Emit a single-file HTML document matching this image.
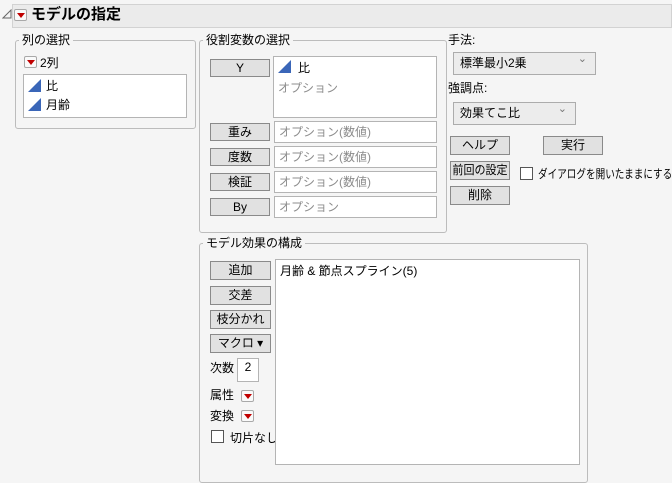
<!DOCTYPE html>
<html><head><meta charset="utf-8"><style>
*{box-sizing:border-box}
body{margin:0;width:672px;height:477px;background:#f5f5f5;font-family:"Liberation Sans","Noto Sans CJK JP",sans-serif;font-size:12px;color:#000;position:relative;overflow:hidden}
.a{position:absolute;white-space:nowrap}
.grp{position:absolute;border:1px solid #bcbcbc;border-radius:3px}
.lg{position:absolute;background:#f5f5f5;padding:0 3px;font-size:12px;line-height:14px;white-space:nowrap}
.btn{position:absolute;background:#e1e1e1;border:1px solid #8a8a8a;text-align:center;font-size:12px;line-height:16px;white-space:nowrap;overflow:hidden}
.box{position:absolute;background:#fff;border:1px solid #b4b4b4;white-space:nowrap}
.ph{color:#8c8c8c}
.rb{position:absolute;width:13px;height:12px;border:1px solid #a9a9a9;border-radius:2px;background:#fafafa}
.rb:after{content:"";position:absolute;left:2px;top:3px;border-left:4px solid transparent;border-right:4px solid transparent;border-top:5px solid #c00000}
.tri{position:absolute;width:14px;height:13px}
.dd{position:absolute;background:#ececec;border:1px solid #acacac;padding-left:6px;line-height:20px;white-space:nowrap}
.dd:after{content:"⌄";position:absolute;right:8px;top:-4px;color:#777;font-size:11px}
.cb{position:absolute;width:13px;height:13px;border:1px solid #555;background:#fff}
</style></head><body>
<svg class="a" style="left:2px;top:9px" width="10" height="10"><path d="M1 9 L9 9 L9 1 Z" fill="none" stroke="#666"/></svg>
<div class="a" style="left:12px;top:4px;width:660px;height:24px;background:#ebebeb;border:1px solid #d2d2d2"></div>
<div class="rb" style="left:14px;top:9px"></div>
<div class="a" style="left:31px;top:5px;font-size:15px;font-weight:bold;line-height:20px">モデルの指定</div>

<div class="grp" style="left:15px;top:40px;width:181px;height:89px"></div>
<div class="lg" style="left:19px;top:33px">列の選択</div>
<div class="rb" style="left:24px;top:56px"></div>
<div class="a" style="left:40px;top:54px">2列</div>
<div class="box" style="left:23px;top:74px;width:164px;height:44px"></div>
<svg class="tri" style="left:28px;top:79px"><path d="M0 13 L13 13 L13 0 Z" fill="#3a66b8"/></svg>
<div class="a" style="left:46px;top:77px">比</div>
<svg class="tri" style="left:28px;top:98px"><path d="M0 13 L13 13 L13 0 Z" fill="#3a66b8"/></svg>
<div class="a" style="left:46px;top:96px">月齢</div>

<div class="grp" style="left:199px;top:40px;width:248px;height:193px"></div>
<div class="lg" style="left:203px;top:33px">役割変数の選択</div>
<div class="btn" style="left:210px;top:59px;width:60px;height:18px">Y</div>
<div class="box" style="left:273px;top:56px;width:164px;height:62px"></div>
<svg class="tri" style="left:278px;top:60px"><path d="M0 13 L13 13 L13 0 Z" fill="#3a66b8"/></svg>
<div class="a" style="left:298px;top:59px">比</div>
<div class="a ph" style="left:278px;top:79px">オプション</div>
<div class="btn" style="left:210px;top:123px;width:60px;height:18px">重み</div>
<div class="box ph" style="left:274px;top:121px;width:163px;height:22px;padding:1px 4px">オプション(数値)</div>
<div class="btn" style="left:210px;top:148px;width:60px;height:18px">度数</div>
<div class="box ph" style="left:274px;top:146px;width:163px;height:22px;padding:1px 4px">オプション(数値)</div>
<div class="btn" style="left:210px;top:173px;width:60px;height:18px">検証</div>
<div class="box ph" style="left:274px;top:171px;width:163px;height:22px;padding:1px 4px">オプション(数値)</div>
<div class="btn" style="left:210px;top:198px;width:60px;height:18px">By</div>
<div class="box ph" style="left:274px;top:196px;width:163px;height:22px;padding:1px 4px">オプション</div>

<div class="a" style="left:448px;top:31px">手法:</div>
<div class="dd" style="left:453px;top:52px;width:143px;height:23px">標準最小2乗</div>
<div class="a" style="left:448px;top:79px">強調点:</div>
<div class="dd" style="left:453px;top:102px;width:123px;height:23px">効果てこ比</div>
<div class="btn" style="left:450px;top:136px;width:60px;height:19px">ヘルプ</div>
<div class="btn" style="left:543px;top:136px;width:60px;height:19px">実行</div>
<div class="btn" style="left:450px;top:161px;width:60px;height:19px"><span style="display:inline-block;transform:scaleX(0.92);margin-left:-6px;margin-right:-6px">前回の設定</span></div>
<div class="cb" style="left:520px;top:167px"></div>
<div class="a" style="left:538px;top:165px;transform:scaleX(0.8);transform-origin:left top">ダイアログを開いたままにする</div>
<div class="btn" style="left:450px;top:186px;width:60px;height:19px">削除</div>

<div class="grp" style="left:199px;top:243px;width:389px;height:240px"></div>
<div class="lg" style="left:203px;top:236px">モデル効果の構成</div>
<div class="btn" style="left:210px;top:261px;width:61px;height:19px">追加</div>
<div class="btn" style="left:210px;top:286px;width:61px;height:19px">交差</div>
<div class="btn" style="left:210px;top:310px;width:61px;height:19px">枝分かれ</div>
<div class="btn" style="left:210px;top:334px;width:61px;height:19px">マクロ ▾</div>
<div class="a" style="left:210px;top:359px">次数</div>
<div class="box" style="left:237px;top:358px;width:22px;height:24px;text-align:center;line-height:16px">2</div>
<div class="a" style="left:210px;top:386px">属性</div>
<div class="rb" style="left:241px;top:390px"></div>
<div class="a" style="left:210px;top:407px">変換</div>
<div class="rb" style="left:241px;top:410px"></div>
<div class="cb" style="left:211px;top:430px"></div>
<div class="a" style="left:230px;top:429px">切片なし</div>
<div class="box" style="left:275px;top:259px;width:305px;height:206px;padding:2px 4px">月齢 &amp; 節点スプライン(5)</div>
</body></html>
